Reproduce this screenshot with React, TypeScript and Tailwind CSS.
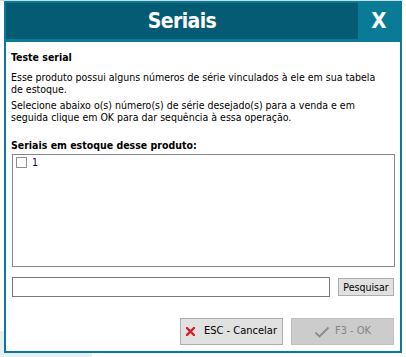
const body = "font-['DejaVu_Sans_Condensed','DejaVu_Sans',sans-serif] font-stretch-condensed";

function CancelIcon() {
  return (
    <svg width="9" height="9" viewBox="0 0 9 9" className="shrink-0">
      <path d="M1 1L8 8M8 1L1 8" stroke="#d4202a" strokeWidth="2.4" strokeLinecap="square" />
    </svg>
  );
}

function CheckIcon() {
  return (
    <svg width="16" height="12" viewBox="0 0 16 12" className="shrink-0">
      <path d="M1.5 6.5L5.5 10.5L14.5 1.5" fill="none" stroke="#8a8a8a" strokeWidth="1.8" />
    </svg>
  );
}

export default function App() {
  return (
    <div className={`relative h-[357px] w-[406px] overflow-hidden bg-white ${body}`}>
      {/* faded page behind the dialog */}
      <div className="absolute bottom-0 left-0 h-[26px] w-[92px] bg-[#e8eff2]" />
      <div className="absolute left-0 top-0 h-px w-[403px] bg-[#c9dde3]" />

      <div className="relative ml-[4px] mt-px flex h-[352px] w-[398px] flex-col border-2 border-[#0a7b97] bg-white">
        {/* title bar */}
        <div className="flex h-[39px] bg-[#0a7b97] pb-[3px]">
          <div className="flex w-[352px] items-center justify-center bg-[#045b73]">
            <span className="text-[21px] font-bold leading-none tracking-[-0.6px] text-white">Seriais</span>
          </div>
          <div className="flex flex-1 items-center justify-center">
            <span className="font-['DejaVu_Sans',sans-serif] text-[22px] font-bold leading-none text-white">X</span>
          </div>
        </div>

        <div className="flex flex-1 flex-col px-[5px] pt-[9px] text-[10.5px] text-black">
          <div className="h-[13px] font-bold leading-[13px]">Teste serial</div>
          <p className="mt-[7px] leading-[12px]">
            Esse produto possui alguns números de série vinculados à ele em sua tabela
            <br />
            de estoque.
          </p>
          <p className="mt-[4px] leading-[12px]">
            Selecione abaixo o(s) número(s) de série desejado(s) para a venda e em
            <br />
            seguida clique em OK para dar sequência à essa operação.
          </p>
          <div className="mt-[16px] h-[13px] font-bold leading-[13px]">Seriais em estoque desse produto:</div>

          <div className="ml-px mt-[2px] h-[113px] border border-[#828790] bg-white pl-[3px] pt-px">
            <label className="flex items-center gap-[5px]">
              <span className="h-[11px] w-[11px] border border-[#8f8f8f] bg-white" />
              <span className="leading-[12px] text-[#240a3c]">1</span>
            </label>
          </div>

          <div className="ml-px mt-[10px] flex items-start gap-[8px]">
            <input className="h-[20px] w-[318px] border border-[#7a7a7a] bg-white outline-none" />
            <button
              type="button"
              className="mt-px h-[18px] w-[56px] border border-[#adadad] bg-[#e1e1e1] leading-none text-black"
            >
              Pesquisar
            </button>
          </div>

          <div className="mr-px mt-[21px] flex justify-end gap-[8px]">
            <button
              type="button"
              className="flex h-[27px] w-[103px] items-center justify-center gap-[9px] border border-[#adadad] bg-[#e1e1e1] text-[11px] text-black"
            >
              <CancelIcon />
              ESC - Cancelar
            </button>
            <button
              type="button"
              className="flex h-[27px] w-[103px] items-center justify-center gap-[5px] border border-[#bfbfbf] bg-[#cccccc] text-[11px] text-[#838383]"
            >
              <CheckIcon />
              F3 - OK
            </button>
          </div>
        </div>
      </div>
    </div>
  );
}
